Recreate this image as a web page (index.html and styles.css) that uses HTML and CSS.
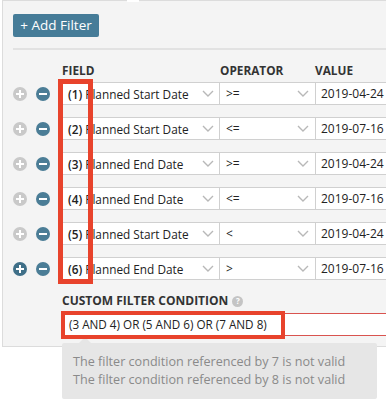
FILE: index.html
```html
<!DOCTYPE html>
<html>
<head>
<meta charset="utf-8">
<link rel="stylesheet" href="styles.css">
</head>
<body>
<div class="panel">
  <div class="toolbar"><button class="btn">+ Add Filter</button></div>
  <div class="sep"></div>
  <div class="head">
    <span class="c-icons"></span>
    <span class="c-field">FIELD</span>
    <span class="c-op">OPERATOR</span>
    <span class="c-val">VALUE</span>
  </div>
  <div class="rows">
    <div class="row">
      <div class="icons"><span class="ic plus"></span><span class="ic minus"></span></div>
      <div class="box field"><span><b>(1)</b> Planned Start Date</span><svg class="chev" width="12" height="7" viewBox="0 0 12 7"><polyline points="1,1 6,6 11,1"/></svg></div>
      <div class="box op"><span>&gt;=</span><svg class="chev" width="12" height="7" viewBox="0 0 12 7"><polyline points="1,1 6,6 11,1"/></svg></div>
      <div class="box val">2019-04-24</div>
    </div>
    <div class="row">
      <div class="icons"><span class="ic plus"></span><span class="ic minus"></span></div>
      <div class="box field"><span><b>(2)</b> Planned Start Date</span><svg class="chev" width="12" height="7" viewBox="0 0 12 7"><polyline points="1,1 6,6 11,1"/></svg></div>
      <div class="box op"><span>&lt;=</span><svg class="chev" width="12" height="7" viewBox="0 0 12 7"><polyline points="1,1 6,6 11,1"/></svg></div>
      <div class="box val">2019-07-16</div>
    </div>
    <div class="row">
      <div class="icons"><span class="ic plus"></span><span class="ic minus"></span></div>
      <div class="box field"><span><b>(3)</b> Planned End Date</span><svg class="chev" width="12" height="7" viewBox="0 0 12 7"><polyline points="1,1 6,6 11,1"/></svg></div>
      <div class="box op"><span>&gt;=</span><svg class="chev" width="12" height="7" viewBox="0 0 12 7"><polyline points="1,1 6,6 11,1"/></svg></div>
      <div class="box val">2019-04-24</div>
    </div>
    <div class="row">
      <div class="icons"><span class="ic plus"></span><span class="ic minus"></span></div>
      <div class="box field"><span><b>(4)</b> Planned End Date</span><svg class="chev" width="12" height="7" viewBox="0 0 12 7"><polyline points="1,1 6,6 11,1"/></svg></div>
      <div class="box op"><span>&lt;=</span><svg class="chev" width="12" height="7" viewBox="0 0 12 7"><polyline points="1,1 6,6 11,1"/></svg></div>
      <div class="box val">2019-07-16</div>
    </div>
    <div class="row">
      <div class="icons"><span class="ic plus"></span><span class="ic minus"></span></div>
      <div class="box field"><span><b>(5)</b> Planned Start Date</span><svg class="chev" width="12" height="7" viewBox="0 0 12 7"><polyline points="1,1 6,6 11,1"/></svg></div>
      <div class="box op"><span>&lt;</span><svg class="chev" width="12" height="7" viewBox="0 0 12 7"><polyline points="1,1 6,6 11,1"/></svg></div>
      <div class="box val">2019-04-24</div>
    </div>
    <div class="row">
      <div class="icons"><span class="ic plus active"></span><span class="ic minus"></span></div>
      <div class="box field"><span><b>(6)</b> Planned End Date</span><svg class="chev" width="12" height="7" viewBox="0 0 12 7"><polyline points="1,1 6,6 11,1"/></svg></div>
      <div class="box op"><span>&gt;</span><svg class="chev" width="12" height="7" viewBox="0 0 12 7"><polyline points="1,1 6,6 11,1"/></svg></div>
      <div class="box val">2019-07-16</div>
    </div>
  </div>
  <div class="custom">
    <div class="label">CUSTOM FILTER CONDITION <span class="help">?</span></div>
    <div class="cond-wrap">
      <div class="cond">(3 AND 4) OR (5 AND 6) OR (7 AND 8)</div>
      <div class="hl hl-cond"></div>
    </div>
  </div>
  <div class="hl hl-field"></div>
</div>
<div class="tip">
  <div>The filter condition referenced by 7 is not valid</div>
  <div>The filter condition referenced by 8 is not valid</div>
</div>
</body>
</html>
```

FILE: styles.css
```css
html {
  overflow: hidden;
}
body {
  margin: 0;
  padding: 0 0 8px 0;
  background: #fff;
  font-family: "Open Sans", "Liberation Sans", sans-serif;
  color: #333;
  font-size: 12px;
}
.panel {
  position: relative;
  margin-left: 2px;
  background: #f4f4f4;
  border-left: 1px solid #dcdcdc;
  border-top: 1px solid #dcdcdc;
  border-bottom: 1px solid #dcdcdc;
  padding: 13px 0 10px 10px;
}
.panel::before {
  content: "";
  position: absolute;
  top: -1px;
  left: 124px;
  width: 12px;
  height: 2px;
  background: #fff;
}
.toolbar {
  display: flex;
}
.btn {
  height: 23px;
  width: 86px;
  padding: 0;
  border: none;
  border-radius: 2px;
  background: #467c98;
  color: #fff;
  font-family: "Open Sans", sans-serif;
  font-size: 13.5px;
  line-height: 23px;
}
.sep {
  margin-top: 11px;
  height: 2px;
  background: #e2e2e2;
}
.head {
  display: flex;
  margin-top: 12px;
  height: 16px;
  line-height: 16px;
  font-weight: 700;
  font-size: 11.8px;
  color: #333;
}
.c-icons { width: 49px; }
.c-field { width: 158px; }
.c-op { width: 95px; }
.rows {
  margin-top: 4px;
  display: flex;
  flex-direction: column;
  gap: 12px;
}
.row {
  display: flex;
  height: 23px;
}
.icons {
  width: 49px;
  flex: none;
  display: flex;
  align-items: center;
  gap: 9px;
}
.ic {
  position: relative;
  width: 14px;
  height: 14px;
  border-radius: 50%;
  background: #c9c9c9;
}
.ic::before {
  content: "";
  position: absolute;
  left: 3px;
  top: 6px;
  width: 8px;
  height: 2px;
  background: #fff;
}
.plus::after {
  content: "";
  position: absolute;
  left: 6px;
  top: 3px;
  width: 2px;
  height: 8px;
  background: #fff;
}
.plus.active { background: #3f6f88; }
.minus { background: #4b7d96; }
.box {
  box-sizing: border-box;
  height: 23px;
  background: #fff;
  border: 1px solid #d0d0d0;
  display: flex;
  align-items: center;
  white-space: nowrap;
  font-size: 12px;
  color: #222;
}
.box b { font-weight: 600; }
.field {
  flex: none;
  width: 158px;
  padding: 0 5px 0 5px;
  justify-content: space-between;
  font-size: 11.8px;
}
.op {
  flex: none;
  width: 96px;
  border-left: none;
  padding: 0 6px 0 6px;
  justify-content: space-between;
}
.val {
  flex: 1;
  border-left: none;
  border-right: none;
  padding-left: 5px;
}
.chev {
  flex: none;
}
.chev polyline {
  fill: none;
  stroke: #b8b8b8;
  stroke-width: 1.4;
}
.custom {
  padding-left: 49px;
}
.label {
  margin-top: 13px;
  height: 16px;
  line-height: 16px;
  font-weight: 700;
  font-size: 12px;
  display: flex;
  align-items: center;
  gap: 4px;
}
.help {
  display: inline-flex;
  align-items: center;
  justify-content: center;
  width: 11px;
  height: 11px;
  border-radius: 50%;
  background: #c4c4c4;
  color: #fff;
  font-size: 8px;
  font-weight: 700;
}
.cond-wrap {
  position: relative;
  margin-top: 4px;
}
.cond {
  box-sizing: border-box;
  height: 23px;
  border: 1px solid #d9534f;
  border-right: none;
  background: #fff;
  padding-left: 6px;
  line-height: 21px;
  font-size: 11.7px;
  color: #222;
}
.tip {
  position: relative;
  z-index: 2;
  margin: -4px 0 0 62px;
  width: 315px;
  height: 56px;
  box-sizing: border-box;
  background: #e6e6e6;
  border-radius: 2px;
  padding: 10px 0 0 11px;
  color: #8a8a8a;
  font-size: 12.6px;
  line-height: 18px;
  white-space: nowrap;
}
.tip::before {
  content: "";
  position: absolute;
  left: 17px;
  top: -6px;
  border-left: 6px solid transparent;
  border-right: 6px solid transparent;
  border-bottom: 6px solid #e6e6e6;
}
.hl {
  position: absolute;
  box-sizing: border-box;
  border: 5px solid #e8432c;
  z-index: 3;
}
.hl-field {
  left: 55px;
  top: 78px;
  width: 35px;
  height: 205px;
}
.hl-cond {
  border-width: 4px;
  left: -1px;
  top: -2px;
  width: 224px;
  height: 28px;
}
```
